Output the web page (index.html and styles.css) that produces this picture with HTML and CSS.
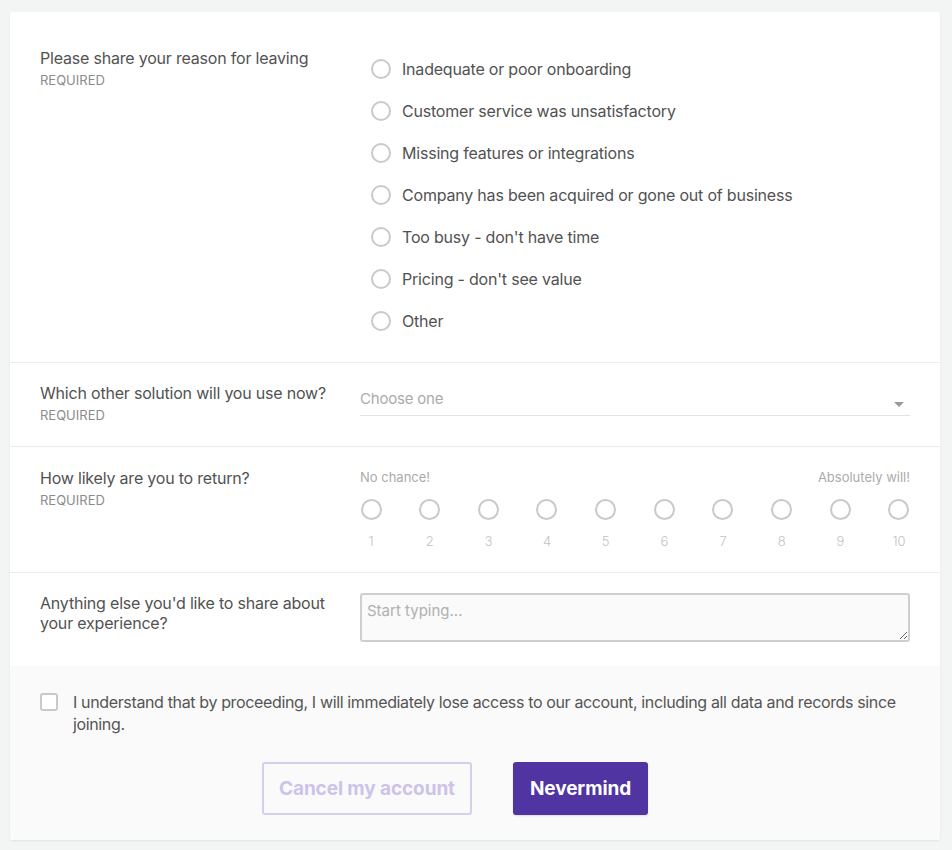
FILE: index.html
```html
<!DOCTYPE html>
<html>
<head>
<meta charset="utf-8">
<link rel="stylesheet" href="styles.css">
</head>
<body>
<div class="card">
  <div class="section sec-reason">
    <div class="label">
      <div class="q">Please share your reason for leaving</div>
      <div class="req">REQUIRED</div>
    </div>
    <div class="field">
      <ul class="options">
        <li><span class="radio"></span>Inadequate or poor onboarding</li>
        <li><span class="radio"></span>Customer service was unsatisfactory</li>
        <li><span class="radio"></span>Missing features or integrations</li>
        <li><span class="radio"></span>Company has been acquired or gone out of business</li>
        <li><span class="radio"></span>Too busy - don't have time</li>
        <li><span class="radio"></span>Pricing - don't see value</li>
        <li><span class="radio"></span>Other</li>
      </ul>
    </div>
  </div>
  <div class="section sec-select">
    <div class="label">
      <div class="q">Which other solution will you use now?</div>
      <div class="req">REQUIRED</div>
    </div>
    <div class="field">
      <div class="select">
        <span class="placeholder">Choose one</span>
        <span class="caret"></span>
      </div>
    </div>
  </div>
  <div class="section sec-rate">
    <div class="label">
      <div class="q">How likely are you to return?</div>
      <div class="req">REQUIRED</div>
    </div>
    <div class="field">
      <div class="scale-ends"><span>No chance!</span><span>Absolutely will!</span></div>
      <div class="scale">
        <div class="pt"><span class="circle"></span><span class="num">1</span></div>
        <div class="pt"><span class="circle"></span><span class="num">2</span></div>
        <div class="pt"><span class="circle"></span><span class="num">3</span></div>
        <div class="pt"><span class="circle"></span><span class="num">4</span></div>
        <div class="pt"><span class="circle"></span><span class="num">5</span></div>
        <div class="pt"><span class="circle"></span><span class="num">6</span></div>
        <div class="pt"><span class="circle"></span><span class="num">7</span></div>
        <div class="pt"><span class="circle"></span><span class="num">8</span></div>
        <div class="pt"><span class="circle"></span><span class="num">9</span></div>
        <div class="pt"><span class="circle"></span><span class="num">10</span></div>
      </div>
    </div>
  </div>
  <div class="section sec-text">
    <div class="label">
      <div class="q">Anything else you'd like to share about your experience?</div>
    </div>
    <div class="field">
      <textarea class="textarea" placeholder="Start typing..."></textarea>
    </div>
  </div>
  <div class="footer">
    <div class="agree">
      <span class="checkbox"></span>
      <p>I understand that by proceeding, I will immediately lose access to our account, including all data and records since joining.</p>
    </div>
    <div class="buttons">
      <button class="btn btn-cancel">Cancel my account</button>
      <button class="btn btn-primary">Nevermind</button>
    </div>
  </div>
</div>
</body>
</html>
```
FILE: styles.css
```css
* { box-sizing: border-box; }
html, body { margin: 0; padding: 0; }
body {
  background: #f3f4f4;
  font-family: Inter, "Noto Sans", sans-serif;
  color: #4d4d4d;
  letter-spacing: -0.2px;
  padding: 12px 12px 10px 10px;
}
.card {
  width: 930px;
  background: #fff;
  border-radius: 3px;
  box-shadow: 0 1px 2px rgba(0,0,0,0.08);
  overflow: hidden;
}
.section {
  display: flex;
  padding: 20px 30px 23px 30px;
  border-bottom: 1px solid #ececec;
}
.label { width: 320px; flex-shrink: 0; }
.q { font-size: 16px; line-height: 20px; color: #525252; padding-right: 20px; }
.req { font-size: 13px; line-height: 16px; margin-top: 4px; color: #8c8c8c; letter-spacing: 0; }
.field { flex: 1; }

.sec-reason { padding-top: 36px; padding-bottom: 20px; }
.options { list-style: none; margin: 0; padding: 0 0 0 11px; }
.options li {
  display: flex; align-items: center;
  height: 42px;
  font-size: 16px; color: #525252;
}
.radio {
  width: 20px; height: 20px;
  border: 2px solid #c9c9c9; border-radius: 50%;
  margin-right: 11px; flex-shrink: 0;
}

.sec-select { padding-top: 20px; padding-bottom: 23px; }
.select {
  position: relative;
  height: 33px;
  border-bottom: 1px solid #e3e3e3;
  display: flex; align-items: center;
}
.placeholder { font-size: 15px; color: #ababab; margin-top: -2px; }
.caret {
  position: absolute; right: 6px; top: 19px;
  width: 0; height: 0;
  border-left: 5px solid transparent;
  border-right: 5px solid transparent;
  border-top: 5px solid #9a9a9a;
}

.sec-rate { padding-top: 21px; padding-bottom: 23px; }
.scale-ends {
  display: flex; justify-content: space-between;
  font-size: 13px; line-height: 18px; color: #ababab; letter-spacing: 0;
}
.scale { display: flex; justify-content: space-between; margin-top: 13px; }
.pt { display: flex; flex-direction: column; align-items: center; width: 22px; }
.circle {
  width: 21px; height: 21px;
  border: 2px solid #c9c9c9; border-radius: 50%;
}
.num { font-size: 13px; line-height: 16px; margin-top: 13px; color: #c2c2c2; font-weight: 300; }

.sec-text { padding-top: 20px; padding-bottom: 24px; border-bottom: none; }
.textarea {
  display: block;
  width: 100%; height: 49px;
  background: #fafafa;
  border: 2px solid #cfcfcf; border-radius: 3px;
  font-family: inherit; font-size: 15px;
  padding: 6px 5px;
  resize: vertical;
}
.textarea::placeholder { color: #b0b0b0; }

.footer {
  background: #fafafa;
  padding: 25px 30px 25px 30px;
}
.agree { display: flex; align-items: flex-start; }
.checkbox {
  width: 18px; height: 18px; flex-shrink: 0;
  border: 2px solid #c9c9c9; border-radius: 3px;
  background: #fff;
  margin-top: 2px; margin-right: 15px;
}
.agree p { margin: 0; font-size: 16px; line-height: 22px; color: #555; letter-spacing: -0.36px; }
.buttons {
  display: flex; gap: 41px;
  margin-top: 27px;
  padding-left: 222px;
}
.btn {
  font-family: inherit; font-size: 19px; font-weight: 700;
  letter-spacing: -0.1px;
  height: 53px; border-radius: 3px; cursor: pointer;
}
.btn-cancel {
  width: 210px;
  background: transparent;
  border: 2px solid #d7cdee;
  color: #cdc3e9;
}
.btn-primary {
  width: 135px;
  background: #5034a1;
  border: none;
  color: #fff;
  box-shadow: 0 1px 2px rgba(0,0,0,0.12);
}
```
